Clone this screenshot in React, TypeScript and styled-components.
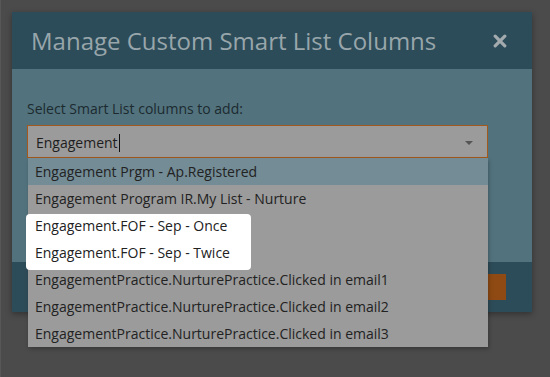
import { FC } from "react";
import styled, { createGlobalStyle } from "styled-components";

const GlobalStyle = createGlobalStyle`
  html, body {
    margin: 0;
    padding: 0;
    background: #4b4b4b;
  }

  body {
    font-family: "Open Sans", "Liberation Sans", sans-serif;
  }
`;

const Page = styled.div`
  height: 377px;
  box-sizing: border-box;
  padding: 12px 0 0 11px;
  border-left: 1px solid #575757;
  overflow: hidden;
`;

const Modal = styled.div`
  width: 520px;
  display: flex;
  flex-direction: column;
  box-shadow: 0 2px 6px rgba(0, 0, 0, 0.35);
`;

const Header = styled.div`
  height: 57px;
  background: #2d4c59;
  display: flex;
  align-items: center;
  justify-content: space-between;
  padding: 0 24px 0 19px;
`;

const Title = styled.h1`
  margin: 0;
  font-size: 24px;
  font-weight: 400;
  color: #98a6ab;
`;

const CloseButton = styled.button`
  width: 16px;
  height: 16px;
  padding: 0;
  border: 0;
  background: none;
  display: flex;
  align-items: center;
  justify-content: center;
  cursor: pointer;
`;

const Body = styled.div`
  height: 193px;
  box-sizing: border-box;
  background: #52737e;
  padding: 30px 44px 0 15px;
`;

const Label = styled.div`
  font-size: 14px;
  line-height: 19px;
  color: #1c2a2f;
  margin-bottom: 7px;
`;

const Combo = styled.div`
  position: relative;
`;

const Input = styled.div`
  height: 33px;
  box-sizing: border-box;
  background: #9b9b9b;
  border: 1px solid #a3591b;
  display: flex;
  align-items: center;
  padding: 2px 8px 0;
  font-size: 14px;
  color: #1e1e1e;
`;

const Caret = styled.span`
  display: inline-block;
  width: 1px;
  height: 18px;
  background: #111;
  margin-left: 1px;
`;

const Arrow = styled.span`
  margin-left: auto;
  margin-right: 6px;
  width: 0;
  height: 0;
  border-left: 4px solid transparent;
  border-right: 4px solid transparent;
  border-top: 4px solid #555;
`;

const Menu = styled.ul`
  position: absolute;
  top: 33px;
  left: 1px;
  width: 460px;
  margin: 0;
  padding: 0;
  list-style: none;
  background: #9b9b9b;
  box-shadow: 1px 2px 4px rgba(0, 0, 0, 0.25);
  z-index: 2;
`;

const Option = styled.li<{ $active?: boolean }>`
  position: relative;
  height: 27px;
  line-height: 27px;
  padding-left: 7px;
  font-size: 14px;
  color: #222;
  white-space: nowrap;
  background: ${(p) => (p.$active ? "#738c96" : "transparent")};
`;

const Group = styled.div`
  position: relative;
`;

const Mark = styled.div`
  position: absolute;
  top: 2px;
  left: -2px;
  width: 225px;
  height: 56px;
  background: #fff;
  border-radius: 4px;
`;

const Footer = styled.div`
  height: 50px;
  background: #2d4c59;
  display: flex;
  align-items: center;
  justify-content: flex-end;
  padding-right: 26px;
`;

const SaveButton = styled.button`
  width: 90px;
  height: 26px;
  border: 0;
  background: #8f4a13;
  color: #8f4a13;
  font-family: inherit;
  font-size: 13px;
`;

const CloseIcon: FC = () => (
  <svg width="14" height="14" viewBox="0 0 14 14">
    <path d="M2.2 2.2 L11.8 11.8 M11.8 2.2 L2.2 11.8" stroke="#a3abae" strokeWidth="3.2" strokeLinecap="round" />
  </svg>
);

const options = [
  "Engagement Prgm - Ap.Registered",
  "Engagement Program IR.My List - Nurture",
];

const marked = ["Engagement.FOF - Sep - Once", "Engagement.FOF - Sep - Twice"];

const rest = [
  "EngagementPractice.NurturePractice.Clicked in email1",
  "EngagementPractice.NurturePractice.Clicked in email2",
  "EngagementPractice.NurturePractice.Clicked in email3",
];

const App: FC = () => (
  <>
    <GlobalStyle />
    <Page>
      <Modal>
        <Header>
          <Title>Manage Custom Smart List Columns</Title>
          <CloseButton aria-label="Close">
            <CloseIcon />
          </CloseButton>
        </Header>
        <Body>
          <Label>Select Smart List columns to add:</Label>
          <Combo>
            <Input>
              Engagement
              <Caret />
              <Arrow />
            </Input>
            <Menu>
              {options.map((o, i) => (
                <Option key={o} $active={i === 0}>
                  {o}
                </Option>
              ))}
              <Group>
                <Mark />
                {marked.map((o) => (
                  <Option key={o}>{o}</Option>
                ))}
              </Group>
              {rest.map((o) => (
                <Option key={o}>{o}</Option>
              ))}
            </Menu>
          </Combo>
        </Body>
        <Footer>
          <SaveButton>Save</SaveButton>
        </Footer>
      </Modal>
    </Page>
  </>
);

export default App;
